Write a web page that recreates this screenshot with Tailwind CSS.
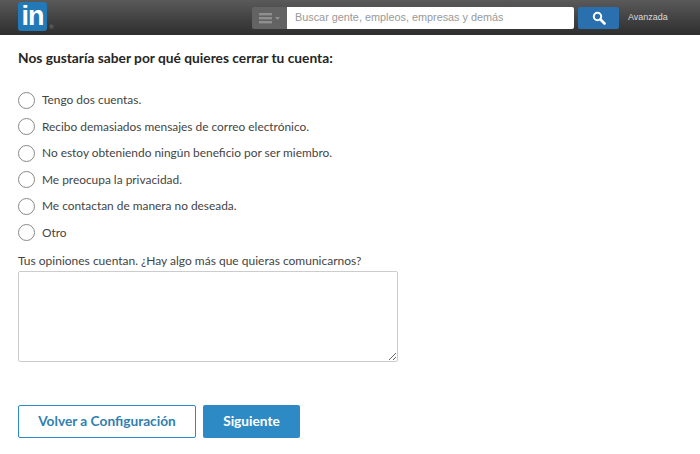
<!DOCTYPE html>
<html lang="es">

<head>
  <meta charset="UTF-8">
  <title>Cerrar cuenta</title>
  <script src="https://cdn.jsdelivr.net/npm/@tailwindcss/browser@4"></script>
</head>

<body class="bg-white h-[454px] overflow-hidden font-['Lato',sans-serif] text-[#333]">
  <!-- Top bar -->
  <div class="h-[35px] bg-gradient-to-b from-[#5a5a5a] to-[#2e2e2e] flex items-center">
    <div class="ml-[18px] mt-[-3px] w-[29px] h-[29px] bg-[#2379b5] rounded-[3px] flex items-center justify-center text-white font-bold text-[27px] leading-none font-['Liberation_Sans',sans-serif] tracking-[-1px]">in</div>
    <span class="self-end mb-[5px] ml-[2px] w-[6px] text-[6px] leading-none text-[#777]">®</span>
    <div class="ml-[197px] w-[35px] h-[22px] bg-[#636363] rounded-l-[2px] flex items-center pl-[7px] gap-[3px]">
      <svg width="21" height="12" viewBox="0 0 21 12">
        <rect x="0" y="1" width="13" height="2.4" fill="#8f8f8f" />
        <rect x="0" y="5" width="13" height="2.4" fill="#8f8f8f" />
        <rect x="0" y="9" width="13" height="2.4" fill="#8f8f8f" />
        <path d="M16 5h5l-2.500 3z" fill="#8f8f8f" />
      </svg>
    </div>
    <div class="w-[287px] h-[22px] bg-white rounded-r-[2px] flex items-center pl-[8px] text-[10.850px] text-[#999] font-['Liberation_Sans',sans-serif]">Buscar gente, empleos, empresas y demás</div>
    <div class="ml-[4px] w-[41px] h-[22px] bg-[#2a6fae] rounded-[2px] flex items-center justify-center">
      <svg width="14" height="14" viewBox="0 0 14 14" fill="none" stroke="white">
        <circle cx="5.500" cy="5.500" r="3.700" stroke-width="2" />
        <path d="M8.500 8.500L12.500 12.500" stroke-width="2.600" stroke-linecap="round" />
      </svg>
    </div>
    <span class="ml-[9px] text-[9px] text-[#ddd] font-['Liberation_Sans',sans-serif]">Avanzada</span>
  </div>

  <!-- Form -->
  <div class="pl-[18px]">
    <h1 class="mt-[13px] h-[20px] leading-[20px] text-[13.750px] font-bold text-[#262626]">Nos gustaría saber por qué quieres cerrar tu cuenta:</h1>

    <div class="mt-[23px] flex flex-col gap-[8.600px] text-[11.900px] text-[#444]">
      <label class="flex items-center gap-[7px] h-[18px]"><span class="w-[17px] h-[17px] rounded-full border border-[#888]"></span>Tengo dos cuentas.</label>
      <label class="flex items-center gap-[7px] h-[18px]"><span class="w-[17px] h-[17px] rounded-full border border-[#888]"></span>Recibo demasiados mensajes de correo electrónico.</label>
      <label class="flex items-center gap-[7px] h-[18px]"><span class="w-[17px] h-[17px] rounded-full border border-[#888]"></span>No estoy obteniendo ningún beneficio por ser miembro.</label>
      <label class="flex items-center gap-[7px] h-[18px]"><span class="w-[17px] h-[17px] rounded-full border border-[#888]"></span>Me preocupa la privacidad.</label>
      <label class="flex items-center gap-[7px] h-[18px]"><span class="w-[17px] h-[17px] rounded-full border border-[#888]"></span>Me contactan de manera no deseada.</label>
      <label class="flex items-center gap-[7px] h-[18px]"><span class="w-[17px] h-[17px] rounded-full border border-[#888]"></span>Otro</label>
    </div>

    <p class="mt-[10px] h-[18px] leading-[18px] text-[12px] text-[#444]">Tus opiniones cuentan. ¿Hay algo más que quieras comunicarnos?</p>
    <textarea class="block mt-[1px] w-[380px] h-[91px] border border-[#ccc] rounded-[2px] outline-none"></textarea>

    <div class="mt-[43px] flex gap-[7px]">
      <button class="w-[178px] h-[33px] border border-[#2e8ac4] rounded-[2px] text-[13.700px] font-bold text-[#2f7fb0]">Volver a Configuración</button>
      <button class="w-[97px] h-[33px] bg-[#2e8ac4] rounded-[2px] text-[13.700px] font-bold text-white">Siguiente</button>
    </div>
  </div>
</body>

</html>
